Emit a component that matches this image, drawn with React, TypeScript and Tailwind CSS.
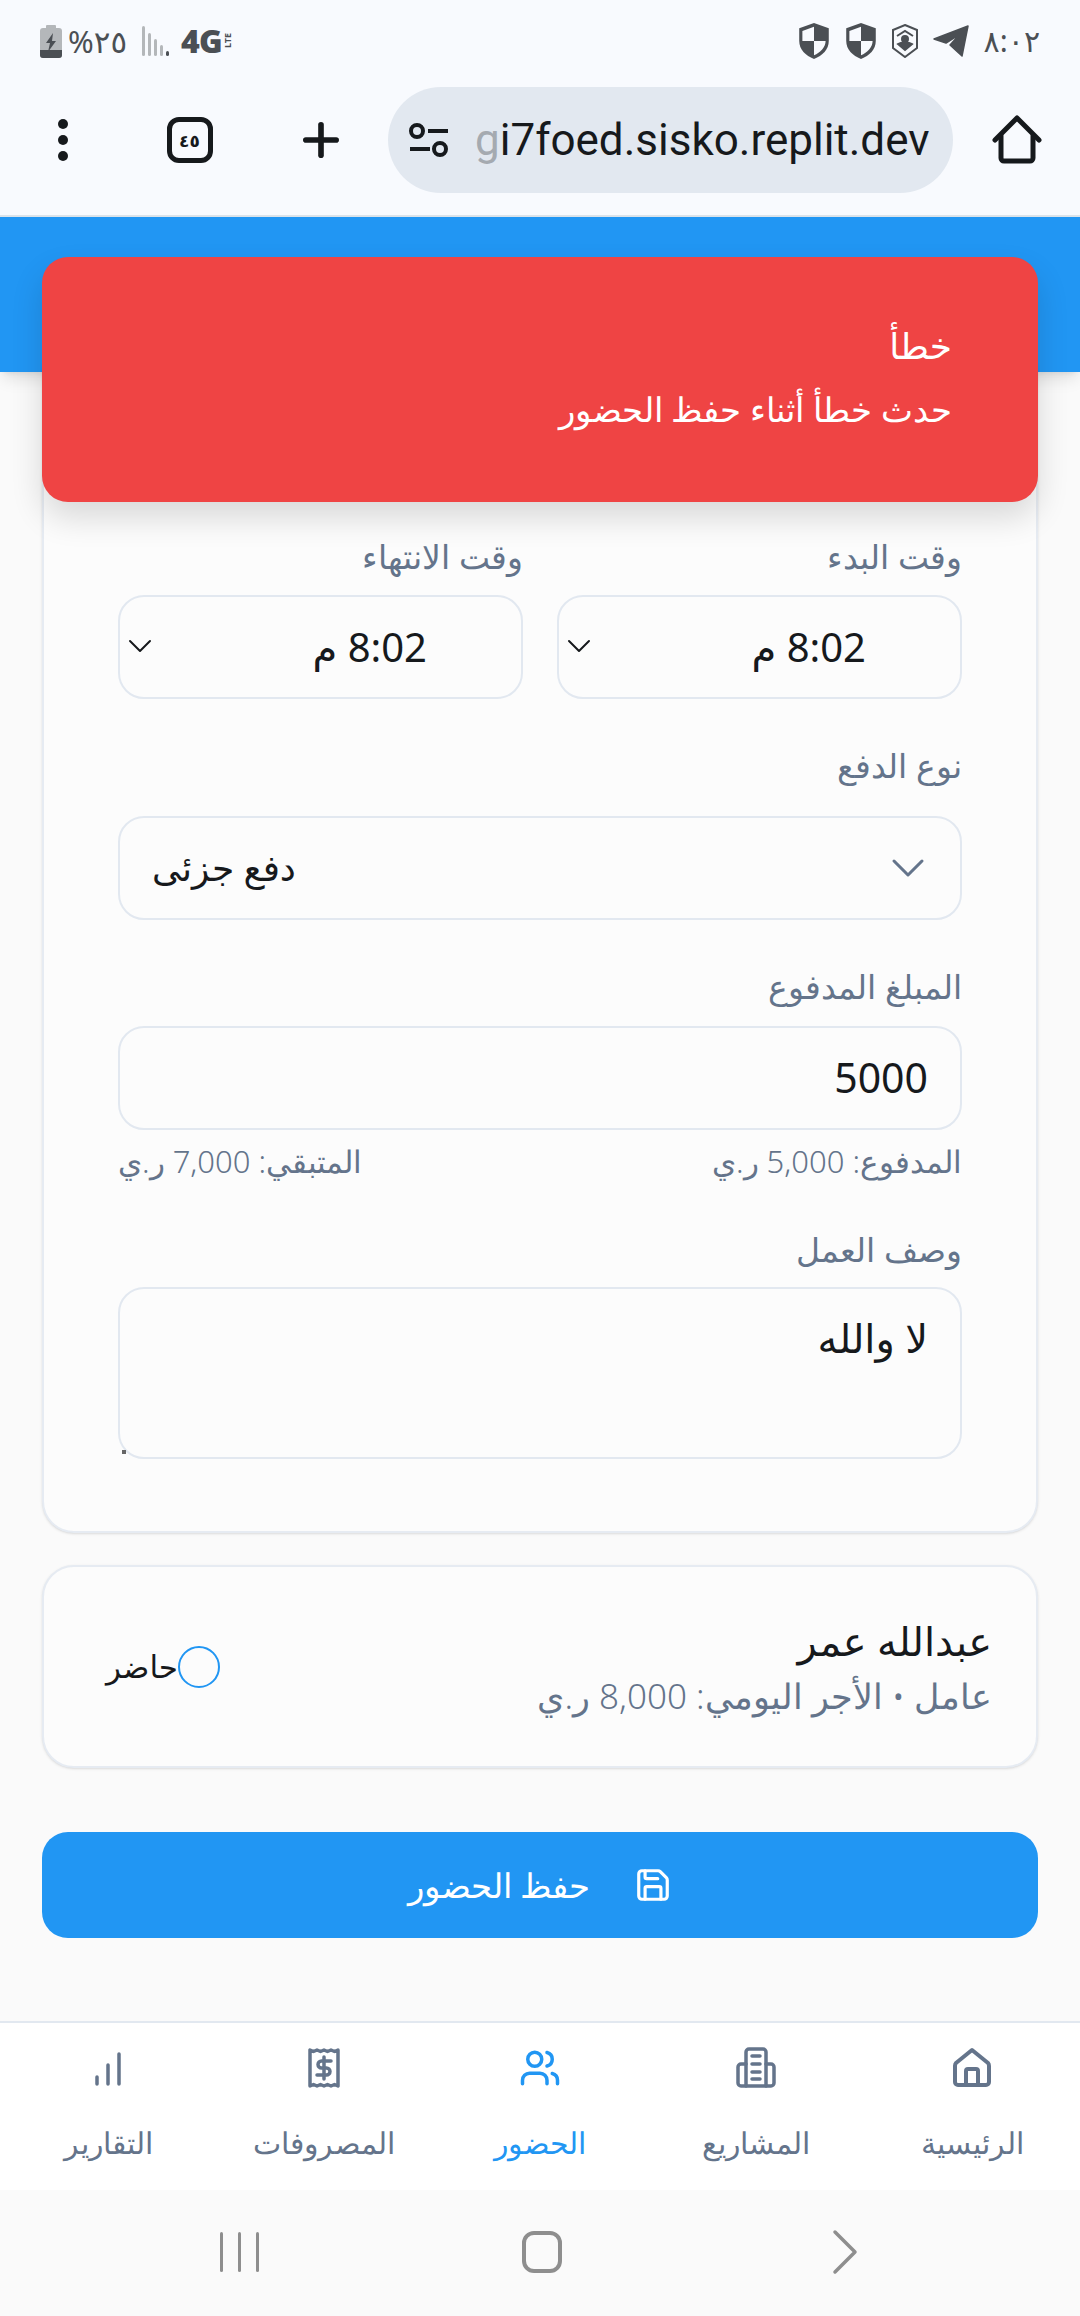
import { ChevronDown, Plus, Save, Users } from "lucide-react";

const HomeIcon = () => (
  <svg width="42" height="42" viewBox="0 0 42 42" fill="none" stroke="currentColor" strokeWidth="4" strokeLinejoin="round">
    <path d="M21 3 37 16c1 1 1 2 1 3v16a3 3 0 0 1-3 3H7a3 3 0 0 1-3-3V19c0-1 0-2 1-3z" />
    <path d="M15 38V24a2 2 0 0 1 2-2h8a2 2 0 0 1 2 2v14" />
  </svg>
);

const BuildingIcon = () => (
  <svg width="42" height="42" viewBox="0 0 42 42" fill="none" stroke="currentColor" strokeWidth="3.500" strokeLinecap="round" strokeLinejoin="round">
    <path d="M11 39V5a3 3 0 0 1 3-3h14a3 3 0 0 1 3 3v34" />
    <path d="M11 17H6a3 3 0 0 0-3 3v16a3 3 0 0 0 3 3h30a3 3 0 0 0 3-3V20a3 3 0 0 0-3-3h-5" />
    <path d="M17 9h8M17 17h8M17 25h8M17 32h8" />
  </svg>
);

const ReceiptIcon = () => (
  <svg width="42" height="42" viewBox="0 0 42 42" fill="none" stroke="currentColor" strokeWidth="3.500" strokeLinecap="round" strokeLinejoin="round">
    <path d="M7 3v36l3.500-1.500L14 39l3.500-1.500L21 39l3.500-1.500L28 39l3.500-1.500L35 39V3l-3.500 1.500L28 3l-3.500 1.500L21 3l-3.500 1.500L14 3l-3.500 1.500z" />
    <path d="M28 14h-9.500a3.500 3.500 0 0 0 0 7h5a3.500 3.500 0 0 1 0 7H14M21 10v22" />
  </svg>
);

const BarsIcon = () => (
  <svg width="42" height="42" viewBox="0 0 42 42" fill="none" stroke="currentColor" strokeWidth="3.500" strokeLinecap="round">
    <path d="M10 30v7M21 18v19M32 7v30" />
  </svg>
);

const navItems = [
  { label: "الرئيسية", icon: HomeIcon, active: false },
  { label: "المشاريع", icon: BuildingIcon, active: false },
  { label: "الحضور", icon: () => <Users size={42} strokeWidth={2} />, active: true },
  { label: "المصروفات", icon: ReceiptIcon, active: false },
  { label: "التقارير", icon: BarsIcon, active: false },
];

const Shield = () => (
  <svg width="32" height="38" viewBox="0 0 30 36">
    <path d="M15 1 29 6v12c0 8-6 14-14 17C7 32 1 26 1 18V6z" fill="#4b4f54" />
    <path d="M15 4.500 4 8.500V18h11zM15 18v13.500c6-2.500 11-7.500 11-13.500z" fill="#f8fafe" />
  </svg>
);

const StatusBar = () => (
  <div dir="ltr" className="h-[70px] flex items-center justify-between pl-[40px] pr-[40px] pt-[12px]">
    <div className="flex items-center">
      <svg width="22" height="33" viewBox="0 0 22 33">
        <rect x="6" y="0" width="10" height="4" rx="1" fill="#b4b7ba" />
        <rect x="0" y="3" width="22" height="30" rx="3" fill="#b4b7ba" />
        <path d="M0 25h22v5a3 3 0 0 1-3 3H3a3 3 0 0 1-3-3z" fill="#4b4f54" />
        <path d="M13 8 6 18h4l-2 9 8-11h-4z" fill="#4b4f54" />
      </svg>
      <span className="ml-[6px] text-[31px] leading-none text-[#4b4f54]">%٢٥</span>
      <svg className="ml-[15px]" width="28" height="30" viewBox="0 0 28 30">
        <rect x="0" y="0" width="3" height="30" rx="1.500" fill="#b4b7ba" />
        <rect x="6" y="7" width="3" height="23" rx="1.500" fill="#b4b7ba" />
        <rect x="12" y="13" width="3" height="17" rx="1.500" fill="#b4b7ba" />
        <rect x="18" y="19" width="3" height="11" rx="1.500" fill="#b4b7ba" />
        <rect x="24" y="25" width="3" height="5" rx="1.500" fill="#4b4f54" />
      </svg>
      <div className="ml-[11px] flex items-center gap-[1px]">
        <span className="text-[32px] font-black leading-none tracking-tight text-[#4b4f54]">4G</span>
        <span className="text-[9px] font-bold leading-none text-[#4b4f54] [writing-mode:vertical-rl] rotate-180">LTE</span>
      </div>
    </div>
    <div className="flex items-center gap-[15px]">
      <Shield />
      <Shield />
      <svg width="26" height="34" viewBox="0 0 26 34" fill="none" stroke="#4b4f54" strokeWidth="2">
        <path d="M13 1 25 6v18l-12 9L1 24V6z" />
        <path d="M5 12l8-5 8 5" />
        <circle cx="13" cy="15" r="3" fill="#4b4f54" />
        <path d="M6 20l7 6 7-6c-3-2-11-2-14 0z" fill="#4b4f54" />
      </svg>
      <svg width="36" height="32" viewBox="0 0 36 32">
        <path d="M35 1 29 31 17 20 27 9 13 18 1 14z" fill="#4b4f54" stroke="#4b4f54" strokeLinejoin="round" strokeWidth="1.500" />
      </svg>
      <span className="text-[30px] leading-none text-[#4b4f54]">٨:٠٢</span>
    </div>
  </div>
);

const BrowserBar = () => (
  <div className="h-[147px] bg-[#f8fafe] border-b-2 border-[#dbe3ea] flex items-center pb-[5px]" dir="ltr">
    <div className="w-[126px] flex justify-center">
      <div className="flex flex-col gap-[6px]">
        <span className="w-[10px] h-[10px] rounded-full bg-[#16191c]" />
        <span className="w-[10px] h-[10px] rounded-full bg-[#16191c]" />
        <span className="w-[10px] h-[10px] rounded-full bg-[#16191c]" />
      </div>
    </div>
    <div className="w-[127px] flex justify-center">
      <div className="w-[46px] h-[46px] rounded-[12px] border-[5px] border-[#16191c] flex items-center justify-center text-[17px] font-bold leading-none text-[#16191c]">
        ٤٥
      </div>
    </div>
    <div className="w-[135px] flex justify-center">
      <Plus size={52} strokeWidth={2.6} className="text-[#16191c]" />
    </div>
    <div className="w-[565px] h-[106px] rounded-full bg-[#e2e8f0] flex items-center pl-[20px] overflow-hidden">
      <svg className="shrink-0" width="42" height="36" viewBox="0 0 42 36" fill="none" stroke="#16191c" strokeWidth="4">
        <circle cx="9" cy="9" r="6" />
        <path d="M20 9h20M2 27h20" />
        <circle cx="32" cy="27" r="6" />
      </svg>
      <span className="ml-[25px] text-[44px] leading-none whitespace-nowrap text-[#16191c] font-['Roboto',sans-serif]">
        <span className="text-[#a5aab0]">g</span>i7foed.sisko.replit.dev
      </span>
    </div>
    <div className="flex-1 flex justify-center">
      <svg width="50" height="50" viewBox="0 0 50 50" fill="none" stroke="#16191c" strokeWidth="5" strokeLinecap="round" strokeLinejoin="round">
        <path d="M3 25 25 3l22 22" />
        <path d="M9 21v22a3 3 0 0 0 3 3h26a3 3 0 0 0 3-3V21" />
      </svg>
    </div>
  </div>
);

const Label = ({ text }: { text: string }) => (
  <label className="block text-[33px] leading-[40px] text-[#64748b] font-light">{text}</label>
);

const TimeField = ({ label }: { label: string }) => (
  <div className="flex-1">
    <Label text={label} />
    <div className="mt-[18px] h-[104px] rounded-[26px] border-2 border-[#e2e8f0] flex items-center justify-between pr-[94px]">
      <span className="text-[40px] text-[#16191c]">8:02 م</span>
      <ChevronDown size={40} strokeWidth={1.2} className="text-[#16191c] -mt-[2px]" />
    </div>
  </div>
);

const App = () => {
  return (
    <div dir="rtl" className="relative w-[1080px] h-[2316px] flex flex-col overflow-hidden bg-[#fafafa] font-['Noto_Sans','DejaVu_Sans',sans-serif]">
      <div className="bg-[#f8fafe]">
        <StatusBar />
        <BrowserBar />
      </div>
      <div className="h-[155px] shrink-0 bg-[#2196f3] shadow-lg" />

      {/* toast sits over the header and the first card */}
      <div className="absolute left-[42px] top-[257px] w-[996px] h-[245px] rounded-[26px] bg-[#ef4444] text-white px-[86px] pt-[65px] shadow-[0_16px_32px_rgba(0,0,0,0.14)]">
        <p className="text-[36px] leading-[48px]">خطأ</p>
        <p className="mt-[16px] text-[34px] leading-[46px] font-light">حدث خطأ أثناء حفظ الحضور</p>
      </div>

      <main className="flex-1 px-[42px]">
        <section className="mt-[-31px] rounded-[32px] border-2 border-[#e6ebf2] bg-[#fcfcfc] shadow-sm pt-[194px] px-[74px] pb-[72px]">
          <div className="flex gap-[34px]">
            <TimeField label="وقت البدء" />
            <TimeField label="وقت الانتهاء" />
          </div>

          <div className="mt-[47px]">
            <Label text="نوع الدفع" />
            <div dir="ltr" className="mt-[30px] h-[104px] rounded-[26px] border-2 border-[#e2e8f0] flex items-center justify-between pl-[32px] pr-[24px]">
              <span className="text-[36px] text-[#16191c]">دفع جزئى</span>
              <ChevronDown size={56} strokeWidth={1.3} className="text-[#64748b]" />
            </div>
          </div>

          <div className="mt-[47px]">
            <Label text="المبلغ المدفوع" />
            <div className="mt-[19px] h-[104px] rounded-[26px] border-2 border-[#e2e8f0] flex items-center px-[32px] text-[41px] text-[#16191c]">
              5000
            </div>
            <div className="mt-[11px] flex justify-between text-[31px] leading-[40px] text-[#64748b] font-light">
              <span>المدفوع: 5,000 ر.ي</span>
              <span>المتبقي: 7,000 ر.ي</span>
            </div>
          </div>

          <div className="mt-[49px]">
            <Label text="وصف العمل" />
            <div className="relative mt-[17px] h-[172px] rounded-[26px] border-2 border-[#e2e8f0] px-[32px] pt-[24px] text-[40px] leading-[50px] text-[#16191c]">
              لا والله
              <span className="absolute left-[2px] bottom-[3px] w-[4px] h-[4px] bg-[#666666]" />
            </div>
          </div>
        </section>

        <section className="mt-[32px] h-[203px] rounded-[32px] border-2 border-[#e6ebf2] bg-[#fcfcfc] shadow-sm flex items-center justify-between pr-[44px] pl-[62px]">
          <div>
            <p className="text-[40px] leading-[52px] text-[#16191c]">عبدالله عمر</p>
            <p className="mt-[6px] text-[35px] leading-[46px] font-light text-[#64748b]">عامل • الأجر اليومي: 8,000 ر.ي</p>
          </div>
          <div className="flex items-center">
            <span className="w-[42px] h-[42px] rounded-full border-2 border-[#2196f3]" />
            <span className="text-[31px] text-[#16191c]">حاضر</span>
          </div>
        </section>

        <button className="mt-[64px] w-full h-[106px] rounded-[26px] bg-[#2196f3] text-white flex items-center justify-center gap-[44px]">
          <Save size={38} strokeWidth={2} />
          <span className="text-[34px] font-light">حفظ الحضور</span>
        </button>
      </main>

      <nav className="h-[169px] shrink-0 bg-white border-t-2 border-[#e2e8f0] grid grid-cols-5">
        {navItems.map((item) => {
          const Icon = item.icon;
          return (
            <div key={item.label} className={`flex flex-col items-center pt-[24px] ${item.active ? "text-[#2196f3]" : "text-[#64748b]"}`}>
              <Icon />
              <span className="mt-[34px] text-[30px] leading-[40px] font-light">{item.label}</span>
            </div>
          );
        })}
      </nav>

      <div dir="ltr" className="h-[126px] shrink-0 flex items-center justify-between pl-[220px] pr-[222px] pb-[2px]">
        <div className="flex gap-[15px]">
          <span className="w-[3px] h-[40px] rounded-full bg-[#8e8e8e]" />
          <span className="w-[3px] h-[40px] rounded-full bg-[#8e8e8e]" />
          <span className="w-[3px] h-[40px] rounded-full bg-[#8e8e8e]" />
        </div>
        <span className="mr-[8px] w-[40px] h-[42px] rounded-[12px] border-[4px] border-[#8e8e8e]" />
        <svg width="26" height="46" viewBox="0 0 26 46" fill="none" stroke="#8e8e8e" strokeWidth="3.500" strokeLinecap="round" strokeLinejoin="round">
          <path d="M3 3l20 20L3 43" />
        </svg>
      </div>
    </div>
  );
};

export default App;
